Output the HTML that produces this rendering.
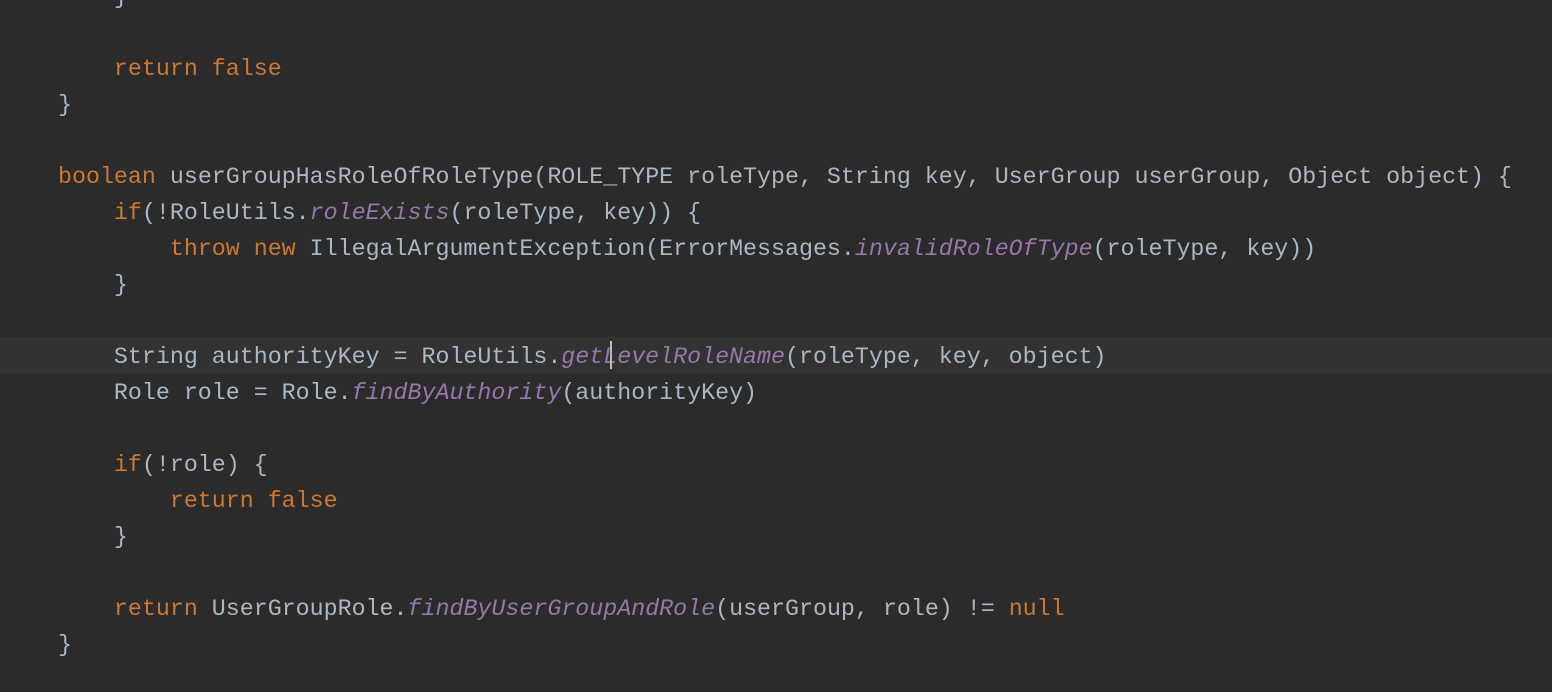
<!DOCTYPE html>
<html><head><style>
html,body{margin:0;padding:0;background:#2b2b2b;width:1552px;height:692px;overflow:hidden}
.hl{position:absolute;left:0;top:337px;width:1552px;height:36px;background:#323232}
pre{position:absolute;left:58px;top:-21px;margin:0;font-family:"Liberation Mono","DejaVu Sans Mono",monospace;font-size:23.3px;line-height:36px;color:#a9b7c6}
.k{color:#cc7832}.m{color:#9876aa;font-style:italic}
.caret{position:absolute;left:610px;top:341px;width:2px;height:28px;background:#bbbbbb}
</style></head><body>
<div class="hl"></div>
<pre>    }

    <span class="k">return false</span>
}

<span class="k">boolean</span> userGroupHasRoleOfRoleType(ROLE_TYPE roleType, String key, UserGroup userGroup, Object object) {
    <span class="k">if</span>(!RoleUtils.<span class="m">roleExists</span>(roleType, key)) {
        <span class="k">throw new</span> IllegalArgumentException(ErrorMessages.<span class="m">invalidRoleOfType</span>(roleType, key))
    }

    String authorityKey = RoleUtils.<span class="m">getLevelRoleName</span>(roleType, key, object)
    Role role = Role.<span class="m">findByAuthority</span>(authorityKey)

    <span class="k">if</span>(!role) {
        <span class="k">return false</span>
    }

    <span class="k">return</span> UserGroupRole.<span class="m">findByUserGroupAndRole</span>(userGroup, role) != <span class="k">null</span>
}</pre>
<div class="caret"></div>
</body></html>
